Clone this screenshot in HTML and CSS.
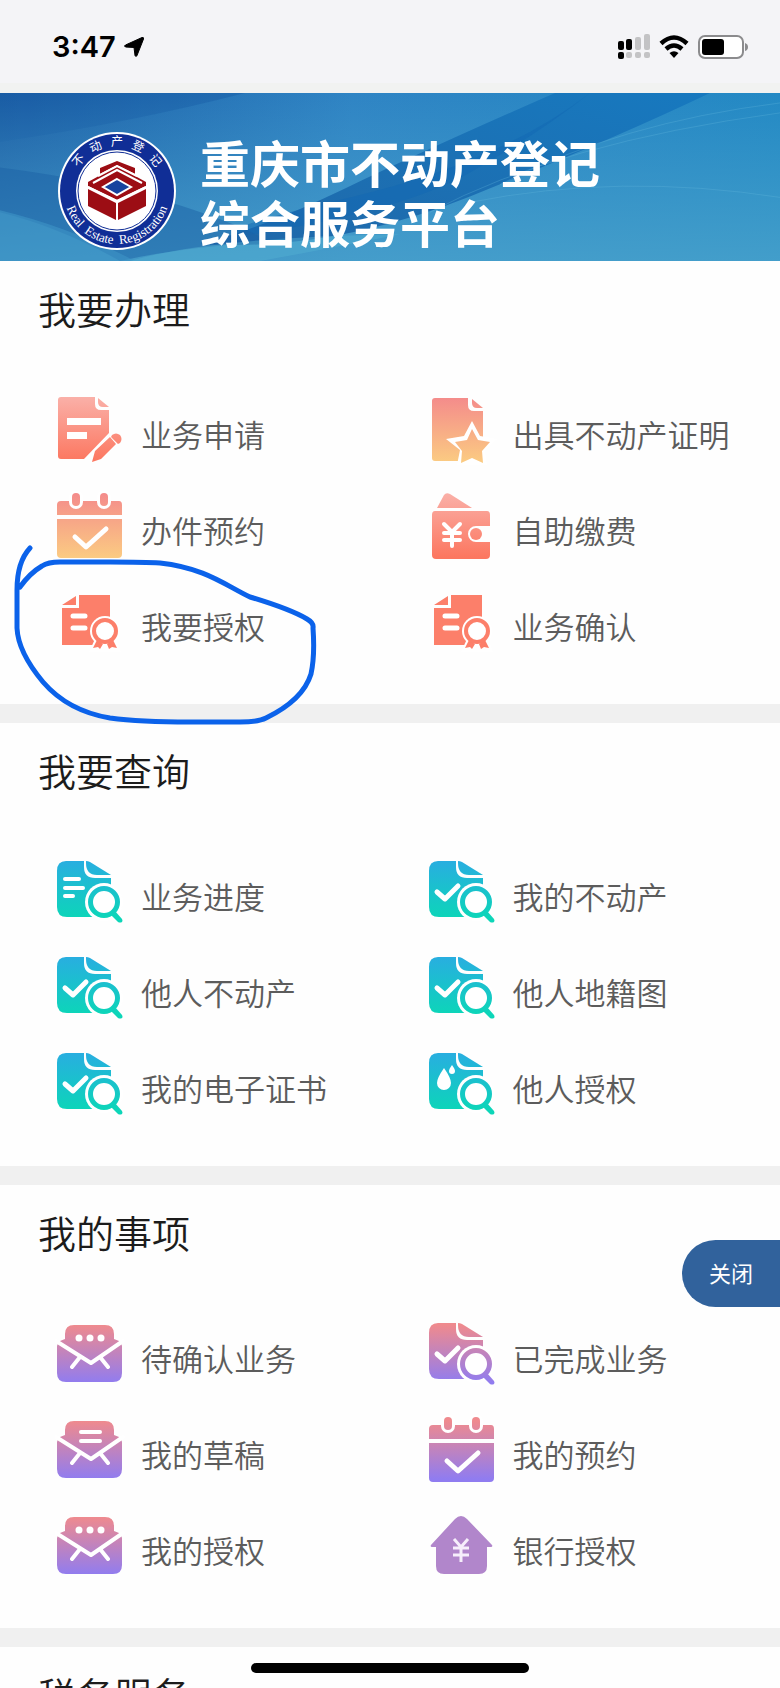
FILE: index.html
```html
<!DOCTYPE html>
<html lang="zh-CN">
<head>
  <meta charset="UTF-8">
  <meta name="viewport" content="width=device-width, initial-scale=1.0">
  <title>重庆市不动产登记综合服务平台</title>
  <link rel="stylesheet" href="styles.css">
</head>
<body>
  <!-- shared icons -->
  <svg class="sprite" aria-hidden="true">
    <defs>
      <linearGradient id="coral" gradientUnits="userSpaceOnUse" x1="0" y1="2" x2="0" y2="66">
        <stop offset="0" stop-color="#fab0a8"/><stop offset="1" stop-color="#fc7760"/>
      </linearGradient>
      <linearGradient id="peach" gradientUnits="userSpaceOnUse" x1="0" y1="2" x2="0" y2="67">
        <stop offset="0" stop-color="#f48b8b"/><stop offset="1" stop-color="#fbcb82"/>
      </linearGradient>
      <linearGradient id="teal" gradientUnits="userSpaceOnUse" x1="0" y1="4" x2="0" y2="62">
        <stop offset="0" stop-color="#28aee0"/><stop offset="1" stop-color="#0cd6b8"/>
      </linearGradient>
      <linearGradient id="violet" gradientUnits="userSpaceOnUse" x1="0" y1="6" x2="0" y2="64">
        <stop offset="0" stop-color="#ef8a8e"/><stop offset="1" stop-color="#907cf0"/>
      </linearGradient>
    </defs>

    <symbol id="apply" viewBox="0 0 70 70">
      <path d="M6 2h34v7q0 6 6 6h8v23L29 64H6q-3 0-3-3V5q0-3 3-3z"/>
      <path d="M43 3l11 9h-6q-5 0-5-5z"/>
      <path class="cut" d="M12 23h34v7H12zM12 37h20v7H12z"/>
      <path d="M37 67l3-11 15-14 6 7-15 15zM57 40q4-3 8 0 3 4 0 8l-2 1-7-7z"/>
    </symbol>
    <symbol id="calendar" viewBox="0 0 70 70">
      <path d="M6 10h58q3 0 3 4v10H2V14q0-4 4-4zM2 28h65v35q0 4-4 4H6q-4 0-4-4z"/>
      <rect class="cut" x="14" y="-1" width="14" height="19" rx="7"/>
      <rect class="cut" x="42" y="-1" width="14" height="19" rx="7"/>
      <rect x="17" y="2" width="8" height="13" rx="4"/>
      <rect x="45" y="2" width="8" height="13" rx="4"/>
      <path class="mark" d="M20 46l11 10 20-18"/>
    </symbol>
    <symbol id="star" viewBox="0 0 70 70">
      <path d="M8 3h33v7q0 6 6 6h9v50H8q-3 0-3-3V6q0-3 3-3z"/>
      <path d="M45 4l11 9h-6q-5 0-5-5z"/>
      <path class="cut" d="M45 26l8 15 17 3-12 12 2 14H30l3-15-14-11 18-3z"/>
      <path d="M45 34l6 11 12 2-8 9 1 12-11-5-11 5 1-12-7-9 12-2z"/>
    </symbol>
    <symbol id="wallet" viewBox="0 0 70 70">
      <path d="M10 17l7-13q2-3 6-1l22 14z"/>
      <path d="M8 20h52q3 0 3 4v11H49a8 8 0 0 0 0 16h14v13q0 4-4 4H9q-4 0-4-4V24q0-4 3-4z"/>
      <circle cx="49" cy="43" r="6"/>
      <path class="mark thin" d="M17 33l8 8 8-8M25 41v14M17 42h16M17 49h16"/>
    </symbol>
    <symbol id="cert" viewBox="0 0 70 70">
      <path d="M7 18l14-9v9zM24 8h31v50H7V21h17z"/>
      <path class="mark" d="M18 29h12M18 41h12"/>
      <circle class="cut" cx="50" cy="44" r="15"/>
      <path class="cut" d="M40 52L34 65h32l-5-13z"/>
      <path d="M42 53l6 4-3 5-2-2-5 1zM58 53l-6 4 2 5 3-2 5 1z"/>
      <path fill-rule="evenodd" d="M50 31a13 13 0 1 0 0 26 13 13 0 0 0 0-26zm0 4a9 9 0 1 1 0 18 9 9 0 0 1 0-18z"/>
    </symbol>
    <symbol id="search" viewBox="0 0 70 70">
      <path d="M11 4h18v6q0 11 11 11h16v39H12Q2 60 2 50V14Q2 4 11 4z"/>
      <path d="M31 4q2 0 4 1l21 13H42q-11 0-11-12z"/>
      <circle class="cut" cx="49" cy="45" r="19"/>
      <path fill-rule="evenodd" d="M49 29a16 16 0 1 0 0 32 16 16 0 0 0 0-32zm0 5a11 11 0 1 1 0 22 11 11 0 0 1 0-22z"/>
      <path d="M56 58l4-4 7 8q1 2 0 3-2 1-4 0z"/>
    </symbol>
    <symbol id="tick" viewBox="0 0 70 70"><path class="mark" d="M10 35l8 7 13-13"/></symbol>
    <symbol id="lines" viewBox="0 0 70 70"><path class="mark thin" d="M10 22h14M10 31h18M10 39h8"/></symbol>
    <symbol id="drops" viewBox="0 0 70 70">
      <path class="cut" d="M17 19q7 10 7 15a7 7 0 0 1-14 0q0-5 7-15zM25 16q3 4 3 6a3 3 0 0 1-6 0q0-2 3-6z"/>
    </symbol>
    <symbol id="mail" viewBox="0 0 70 70">
      <path d="M10 20v-5q0-9 9-9h31q9 0 9 9v5l5 2q3 2 3 5v27q0 9-9 9H11q-9 0-9-9V27q0-3 3-5z"/>
      <path class="mark thin" d="M1 22l35 22 32-22M25 38l-8 10M45 38l8 10"/>
    </symbol>
    <symbol id="dots" viewBox="0 0 70 70">
      <circle class="cut" cx="24" cy="19" r="3.500"/><circle class="cut" cx="35" cy="19" r="3.500"/><circle class="cut" cx="46" cy="19" r="3.500"/>
    </symbol>
    <symbol id="draft" viewBox="0 0 70 70"><path class="mark thin" d="M26 17h19M26 26h19"/></symbol>
    <symbol id="house" viewBox="0 0 70 70">
      <path d="M28 8q6-6 12 0l25 26q1 2-1 2h-4v19q0 8-8 8H17q-8 0-8-8V36H5q-2 0-1-2z"/>
      <path class="yen" d="M27 28l7 8 7-8M34 36v15M26 37h16M26 44h16"/>
    </symbol>
  </svg>

  <div class="app">
    <header class="status">
      <div class="status-left">
        <span class="time">3:47</span>
        <svg width="20" height="20" viewBox="0 0 20 20"><path d="M18 .5Q20 0 19.500 2L13 18.500q-1 2-2 0L10 10.500 1.500 10q-2-1 0-2z" stroke="#000"/></svg>
      </div>
      <div class="status-right">
        <svg width="32" height="26" viewBox="0 0 32 26">
          <g fill="#000"><rect y="7" width="6" height="9" rx="2"/><rect x="8" y="5" width="6" height="11" rx="2"/><rect y="18" width="6" height="7" rx="2"/></g>
          <g fill="#c3c3c5"><rect x="17" y="3" width="6" height="13" rx="2"/><rect x="26" width="6" height="16" rx="2"/><rect x="8" y="18" width="6" height="6" rx="2"/><rect x="17" y="18" width="6" height="6" rx="2"/><rect x="26" y="18" width="6" height="6" rx="2"/></g>
        </svg>
        <svg width="30" height="24" viewBox="0 0 30 24">
          <path d="M2 8.500q13-12 26 0M7 14q8-7 16 0" fill="none" stroke="#000" stroke-width="4.500"/>
          <path d="M10.500 18q4.500-3.500 9 0L15 23z"/>
        </svg>
        <svg width="50" height="24" viewBox="0 0 50 24">
          <rect x="1" y="1" width="44" height="22" rx="6" fill="#fff" stroke="#8b8b8d" stroke-width="2"/>
          <rect x="4" y="4" width="22" height="16" rx="3"/>
          <path d="M47 8q3 1 3 4t-3 4z" fill="#8b8b8d"/>
        </svg>
      </div>
    </header>

    <div class="banner">
      <svg class="banner-art" viewBox="0 0 780 169" preserveAspectRatio="none" aria-hidden="true">
        <defs>
          <linearGradient id="sky" x1="0" y1="0" x2="1" y2="0">
            <stop offset="0" stop-color="#1d5fa6"/><stop offset=".45" stop-color="#2f84c4"/><stop offset="1" stop-color="#2389c4"/>
          </linearGradient>
          <linearGradient id="shade" x1="0" y1="0" x2="0" y2="1">
            <stop offset="0" stop-color="#4aa3cc" stop-opacity="0"/><stop offset="1" stop-color="#4aa3cc" stop-opacity=".8"/>
          </linearGradient>
          <linearGradient id="band" x1="1" y1="0" x2="0" y2="1">
            <stop offset="0" stop-color="#1779bf"/><stop offset="1" stop-color="#2068a9"/>
          </linearGradient>
        </defs>
        <rect width="780" height="169" fill="url(#sky)"/>
        <path d="M0 49Q130 30 245 0H0z" fill="#1557a2" opacity=".4"/>
        <rect width="780" height="169" fill="url(#shade)"/>
        <path d="M555 0Q430 55 345 96T200 152Q330 160 470 104T710 0z" fill="url(#band)"/>
        <path d="M590 0Q500 70 350 105T240 144Q400 120 470 80T590 0z" fill="#1267b4" opacity=".5"/>
        <path d="M0 75Q100 88 170 110T270 150Q180 155 120 169Q60 135 0 120z" fill="#1b62a6" opacity=".5"/>
        <path d="M0 118Q70 135 135 169H0z" fill="#3d95c6" opacity=".6"/>
        <path d="M130 169Q210 145 400 142Q310 160 260 169z" fill="#55b1d3" opacity=".45"/>
        <path d="M430 120Q560 50 780 20M470 110Q620 80 780 105M500 92Q620 30 780 10" fill="none" stroke="#65b7df" opacity=".3"/>
      </svg>
      <svg class="logo" viewBox="0 0 118 118" role="img" aria-label="不动产登记 Real Estate Registration">
        <defs>
          <path id="arc-top" d="M14 59a45 45 0 0 1 90 0"/>
          <path id="arc-bottom" d="M6 59a53 53 0 0 0 106 0"/>
        </defs>
        <circle cx="59" cy="59" r="59" fill="#fff"/>
        <circle cx="59" cy="59" r="57" fill="#102e96"/>
        <circle cx="59" cy="59" r="41" fill="#fff"/>
        <circle cx="59" cy="59" r="39" fill="none" stroke="#102e96"/>
        <text class="ring-cn"><textPath href="#arc-top" startOffset="50%" text-anchor="middle">不&#160;&#160; 动&#160;&#160; 产&#160;&#160; 登&#160;&#160; 记</textPath></text>
        <text class="ring-en"><textPath href="#arc-bottom" startOffset="50%" text-anchor="middle">Real&#160; Estate&#160; Registration</textPath></text>
        <g fill="#9c0d14">
          <path d="M30 57l28 14v17L30 74zM88 57L60 71v17l28-14z"/>
          <path d="M30 54v-4l29-16 29 16v4L59 68z"/>
          <path d="M42 42v-6l17-7 18 7v6l-18-9z"/>
        </g>
        <path d="M35 51l24-13 25 13M40 44l19-10 20 10M30 55l29 14 29-14" fill="none" stroke="#fff" stroke-width="2"/>
        <path d="M59 47l14 8-14 8-14-8z" fill="#17439e" stroke="#fff" stroke-width="2"/>
      </svg>
      <h1 class="title">重庆市不动产登记<br>综合服务平台</h1>
    </div>

    <main>
      <section class="panel">
        <h2>我要办理</h2>
        <nav class="menu">
          <a href="#"><svg fill="url(#coral)"><use href="#apply"/></svg>业务申请</a>
          <a href="#"><svg fill="url(#peach)"><use href="#star"/></svg>出具不动产证明</a>
          <a href="#"><svg fill="url(#peach)"><use href="#calendar"/></svg>办件预约</a>
          <a href="#"><svg fill="url(#coral)"><use href="#wallet"/></svg>自助缴费</a>
          <a href="#"><svg fill="#fc7f6a"><use href="#cert"/></svg>我要授权</a>
          <a href="#"><svg fill="#fc7f6a"><use href="#cert"/></svg>业务确认</a>
        </nav>
        <!-- hand-drawn circle round 我要授权 -->
        <svg class="doodle" width="330" height="190" viewBox="0 0 330 190" aria-hidden="true">
          <path d="M30 8Q17 22 17 50V88Q18 112 43 142 68 171 110 178 140 182 190 182H240Q258 182 266 178 303 160 311 134 315 116 313 88 314 83 307 79 290 69 250 57C225 45 205 28 160 23Q145 22 110 22H60Q48 22 42 26 30 33 20 47"/>
        </svg>
      </section>

      <section class="panel">
        <h2>我要查询</h2>
        <nav class="menu">
          <a href="#"><svg fill="url(#teal)"><use href="#search"/><use href="#lines"/></svg>业务进度</a>
          <a href="#"><svg fill="url(#teal)"><use href="#search"/><use href="#tick"/></svg>我的不动产</a>
          <a href="#"><svg fill="url(#teal)"><use href="#search"/><use href="#tick"/></svg>他人不动产</a>
          <a href="#"><svg fill="url(#teal)"><use href="#search"/><use href="#tick"/></svg>他人地籍图</a>
          <a href="#"><svg fill="url(#teal)"><use href="#search"/><use href="#tick"/></svg>我的电子证书</a>
          <a href="#"><svg fill="url(#teal)"><use href="#search"/><use href="#drops"/></svg>他人授权</a>
        </nav>
      </section>

      <section class="panel">
        <h2>我的事项</h2>
        <nav class="menu">
          <a href="#"><svg fill="url(#violet)"><use href="#mail"/><use href="#dots"/></svg>待确认业务</a>
          <a href="#"><svg fill="url(#violet)"><use href="#search"/><use href="#tick"/></svg>已完成业务</a>
          <a href="#"><svg fill="url(#violet)"><use href="#mail"/><use href="#draft"/></svg>我的草稿</a>
          <a href="#"><svg fill="url(#violet)"><use href="#calendar"/></svg>我的预约</a>
          <a href="#"><svg fill="url(#violet)"><use href="#mail"/><use href="#dots"/></svg>我的授权</a>
          <a href="#"><svg fill="#b186cb"><use href="#house"/></svg>银行授权</a>
        </nav>
      </section>

      <section class="panel">
        <h2>税务服务</h2>
      </section>
    </main>

    <button class="close" type="button">关闭</button>
    <div class="home-bar"></div>
  </div>
</body>
</html>
```
FILE: styles.css
```css
* {
  box-sizing: border-box;
}
body {
  margin: 0;
  font-family: "Noto Sans CJK SC", sans-serif;
  color: #1c1c1c;
  background: #fefefe;
}
.sprite {
  display: block;
  width: 0;
  height: 0;
}
.app {
  position: relative;
  height: 100vh;
  overflow: hidden;
}

/* status bar */
.status {
  display: flex;
  justify-content: space-between;
  align-items: center;
  height: 93px;
  padding: 0 32px 0 52px;
  background: #f4f4f7;
  border-bottom: 10px solid #f1f2f1;
}
.status-left, .status-right {
  display: flex;
  align-items: center;
  gap: 9px;
  padding-top: 10px;
}
.status-left {
  gap: 8px;
}
.time {
  font-family: Inter, sans-serif;
  font-size: 29px;
  font-weight: 600;
  line-height: 36px;
  color: #000;
}

/* banner */
.banner {
  position: relative;
  display: flex;
  align-items: center;
  gap: 24px;
  height: 168px;
  padding: 28px 0 0 58px;
}
.banner-art {
  position: absolute;
  inset: 0;
  width: 100%;
  height: 100%;
}
.logo {
  position: relative;
  width: 118px;
  height: 118px;
}
.ring-cn {
  font-family: "Noto Sans CJK SC", sans-serif;
  font-size: 12px;
  fill: #fff;
}
.ring-en {
  font-family: "Liberation Serif", serif;
  font-size: 13px;
  fill: #fff;
}
.title {
  position: relative;
  margin: 0;
  font-size: 50px;
  line-height: 60px;
  font-weight: bold;
  color: #fff;
}

/* menu sections */
.panel {
  position: relative;
  padding: 19px 0 31px;
  border-bottom: 19px solid #f0f0f0;
}
.panel h2 {
  margin: 0 0 49px;
  padding-left: 38px;
  font-size: 38px;
  line-height: 56px;
  font-weight: 350;
}
.menu {
  display: grid;
  grid-template-columns: 1fr 1fr;
  column-gap: 18px;
  padding-left: 55px;
}
.menu a {
  display: flex;
  align-items: center;
  gap: 16px;
  height: 96px;
  font-size: 31px;
  font-weight: 350;
  color: #5c5c5c;
  text-decoration: none;
  white-space: nowrap;
}
.menu svg {
  flex: none;
  width: 70px;
  height: 70px;
  margin-bottom: 6px;
}
.cut {
  fill: #fff;
}
.mark {
  fill: none;
  stroke: #fff;
  stroke-width: 5;
  stroke-linecap: round;
  stroke-linejoin: round;
}
.thin {
  stroke-width: 4;
}
.yen {
  fill: none;
  stroke: #f6eefb;
  stroke-width: 3;
}

/* overlays */
.doodle {
  position: absolute;
  left: 0;
  top: 279px;
  z-index: 1;
}
.doodle path {
  fill: none;
  stroke: #0b62ea;
  stroke-width: 5;
  stroke-linecap: round;
}
.close {
  position: absolute;
  right: 0;
  top: 1240px;
  width: 98px;
  height: 67px;
  padding: 0 0 4px;
  border: 0;
  border-radius: 34px 0 0 34px;
  background: #31629c;
  color: #fff;
  font-family: inherit;
  font-size: 22px;
}
.home-bar {
  position: absolute;
  left: 50%;
  bottom: 15px;
  width: 278px;
  height: 10px;
  margin-left: -139px;
  border-radius: 5px;
  background: #000;
}
```
